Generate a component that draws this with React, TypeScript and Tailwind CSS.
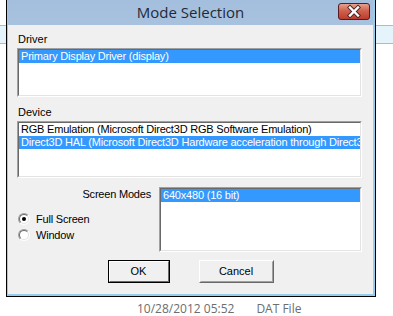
import React from "react";

const sans = "font-['Liberation_Sans',Arial,sans-serif]";

function ListBox({ items, selected, className }: { items: string[]; selected: number; className: string }) {
  return (
    <div className={`border border-t-[#a0a0a0] border-l-[#a0a0a0] border-r-white border-b-white ${className}`}>
      <div className="h-full overflow-hidden border border-t-[#696969] border-l-[#696969] border-r-[#e3e3e3] border-b-[#e3e3e3] bg-white">
        {items.map((t, i) => (
          <div
            key={i}
            className={`h-[13px] whitespace-nowrap pl-[2px] text-[11px] leading-[13px] tracking-[-0.2px] ${
              i === selected ? "bg-[#3399ff] text-white" : "text-black"
            }`}
          >
            {t}
          </div>
        ))}
      </div>
    </div>
  );
}

function Radio({ checked, label }: { checked?: boolean; label: string }) {
  return (
    <div className="flex h-[16px] items-center">
      <div className="h-[12px] w-[12px] rounded-full border border-t-[#a0a0a0] border-l-[#a0a0a0] border-r-white border-b-white">
        <div className="flex h-full w-full items-center justify-center rounded-full border border-t-[#696969] border-l-[#696969] border-r-[#e3e3e3] border-b-[#e3e3e3] bg-white">
          {checked && <div className="h-[4px] w-[4px] rounded-full bg-black" />}
        </div>
      </div>
      <span className="ml-[6px] text-[11px] tracking-[-0.2px] text-black">{label}</span>
    </div>
  );
}

function CloseButton() {
  return (
    <svg width="32" height="17" viewBox="0 0 32 17">
      <defs>
        <linearGradient id="cg" x1="0" y1="0" x2="0" y2="1">
          <stop offset="0" stopColor="#e8a593" />
          <stop offset="0.45" stopColor="#d0624e" />
          <stop offset="1" stopColor="#bb3a2c" />
        </linearGradient>
      </defs>
      <rect x="0.5" y="0.5" width="31" height="16" rx="2.5" fill="url(#cg)" stroke="#5a1b1f" />
      <path d="M12 4.5 L20 12.5 M20 4.5 L12 12.5" stroke="#4a2422" strokeWidth="4.2" strokeLinecap="square" />
      <path d="M12 4.5 L20 12.5 M20 4.5 L12 12.5" stroke="#ffffff" strokeWidth="2.4" strokeLinecap="square" />
    </svg>
  );
}

export default function App() {
  return (
    <div className={`relative h-[316px] w-[393px] overflow-hidden bg-white ${sans}`}>
      {/* explorer list behind the dialog */}
      <div className="mt-[25px] h-[19px] border-y border-[#84c8ea] bg-[#e5f3fb]" />
      <div className="mt-[258px] flex text-[12px] leading-[14px] text-[#6d6d6d] font-['Open_Sans','Noto_Sans',sans-serif]">
        <span className="ml-[137px]">10/28/2012 05:52</span>
        <span className="ml-[22px]">DAT File</span>
      </div>

      {/* dialog window */}
      <div className="absolute left-[6px] top-[-1px] h-[298px] w-[370px] border border-black">
        <div className="flex h-full flex-col border-l border-r-2 border-b-2 border-[#96cdec] bg-gradient-to-b from-[#a4bfdd] to-[#cadaeb]">
          <div className="relative flex h-[25px] shrink-0 items-center justify-center">
            <span className="text-[15px] text-[#1e2a3a] font-['Open_Sans','Noto_Sans',sans-serif]">Mode Selection</span>
            <div className="absolute right-[3px] top-[3px] flex">
              <CloseButton />
            </div>
          </div>
          <div className="flex flex-1 flex-col bg-[#f0f0f0] pl-[9px] pt-[8px]">
            <div className="ml-[1px] h-[13px] text-[11px] leading-[13px] text-black">Driver</div>
            <ListBox className="mt-[2px] h-[49px] w-[345px]" items={["Primary Display Driver (display)"]} selected={0} />
            <div className="ml-[1px] mt-[9px] h-[13px] text-[11px] leading-[13px] text-black">Device</div>
            <ListBox
              className="mt-[2px] h-[57px] w-[345px]"
              items={[
                "RGB Emulation (Microsoft Direct3D RGB Software Emulation)",
                "Direct3D HAL (Microsoft Direct3D Hardware acceleration through Direct3D HAL)",
              ]}
              selected={1}
            />
            <div className="mt-[9px] flex">
              <div className="flex w-[142px] flex-col">
                <div className="mt-[1px] h-[13px] pr-[8px] text-right text-[11px] leading-[13px] tracking-[-0.2px] text-black">Screen Modes</div>
                <div className="ml-[1px] mt-[10px] flex flex-col">
                  <Radio checked label="Full Screen" />
                  <Radio label="Window" />
                </div>
              </div>
              <ListBox className="h-[65px] w-[203px]" items={["640x480 (16 bit)"]} selected={0} />
            </div>
            <div className="mt-[8px] flex justify-center gap-[29px] pr-[9px]">
              <button className="h-[23px] w-[62px] border border-black bg-[#f0f0f0] text-[11px] text-black">
                <div className="flex h-full w-full items-center justify-center border border-t-white border-l-white border-r-[#696969] border-b-[#696969]">
                  OK
                </div>
              </button>
              <button className="h-[23px] w-[75px] border border-t-white border-l-white border-r-[#696969] border-b-[#696969] bg-[#f0f0f0] text-[11px] text-black">
                <div className="flex h-full w-full items-center justify-center border border-t-[#f0f0f0] border-l-[#f0f0f0] border-r-[#a0a0a0] border-b-[#a0a0a0]">
                  Cancel
                </div>
              </button>
            </div>
          </div>
        </div>
      </div>
    </div>
  );
}
